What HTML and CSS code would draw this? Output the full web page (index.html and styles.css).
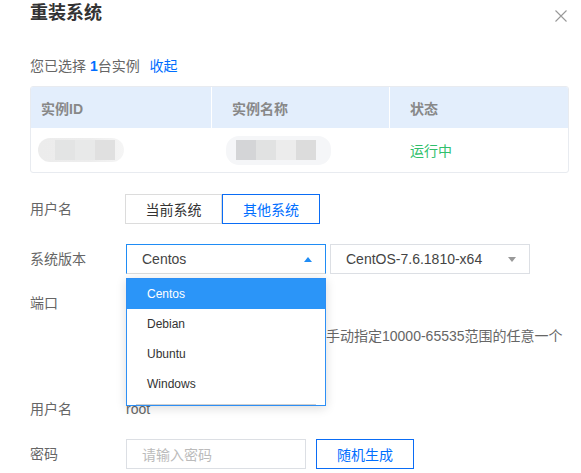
FILE: index.html
```html
<!DOCTYPE html>
<html lang="zh">
<head>
<meta charset="utf-8">
<title>重装系统</title>
<link rel="stylesheet" href="styles.css">
</head>
<body>
<div class="dialog">
  <div class="dlg-head">
    <h1 class="dlg-title">重装系统</h1>
    <svg class="close" width="12" height="12" viewBox="0 0 12 12"><path d="M0.5 0.5L11.5 11.5M11.5 0.5L0.5 11.5" stroke="#999" stroke-width="1.1" fill="none"/></svg>
  </div>

  <div class="picked">您已选择 <b class="num">1</b>台实例 <a class="link">收起</a></div>

  <div class="table">
    <div class="th th1">实例ID</div>
    <div class="th th2">实例名称</div>
    <div class="th th3">状态</div>
    <div class="td td1">
      <div class="pill pill-a"><span class="sq a1"></span><span class="sq a2"></span><span class="sq a3"></span></div>
    </div>
    <div class="td td2">
      <div class="pill pill-b"><span class="sq b1"></span><span class="sq b2"></span><span class="sq b3"></span><span class="sq b4"></span></div>
    </div>
    <div class="td td3"><span class="running">运行中</span></div>
  </div>

  <div class="row row1">
    <div class="label">用户名</div>
    <div class="btn-group">
      <button class="seg">当前系统</button>
      <button class="seg seg-on">其他系统</button>
    </div>
  </div>

  <div class="row row2">
    <div class="label">系统版本</div>
    <div class="selwrap">
      <div class="select select-open">
        <span>Centos</span>
        <span class="tri tri-up"></span>
      </div>
      <ul class="menu">
        <li class="opt opt-on">Centos</li>
        <li class="opt">Debian</li>
        <li class="opt">Ubuntu</li>
        <li class="opt">Windows</li>
        <li class="menu-foot"></li>
      </ul>
    </div>
    <div class="select select2">
      <span>CentOS-7.6.1810-x64</span>
      <span class="tri tri-down"></span>
    </div>
  </div>

  <div class="row row3">
    <div class="label">端口</div>
    <div class="ctrl-col">
      <div class="input port-input"></div>
      <div class="hint">手动指定10000-65535范围的任意一个</div>
    </div>
  </div>

  <div class="row row4">
    <div class="label">用户名</div>
    <div class="value">root</div>
  </div>

  <div class="row row5">
    <div class="label">密码</div>
    <div class="input pwd"><span class="ph">请输入密码</span></div>
    <button class="btn-outline">随机生成</button>
  </div>
</div>
</body>
</html>
```

FILE: styles.css
```css
* { box-sizing: border-box; }
html, body { margin: 0; padding: 0; background: #fff; }
body {
  font-family: "Liberation Sans", "Noto Sans CJK SC", sans-serif;
  font-size: 14px;
  color: #333;
}
.dialog { padding: 0 12px 0 30px; width: 581px; height: 473px; overflow: hidden; }

.dlg-head { display: flex; justify-content: space-between; align-items: flex-start; height: 26px; }
.dlg-title { margin: 0; font-size: 18px; line-height: 26px; font-weight: 700; color: #333; }
.close { margin-top: 10px; margin-right: 2px; }

.picked { margin-top: 30px; line-height: 20px; color: #666; font-size: 14px; }
.picked .num { color: #006eff; font-weight: 700; }
.picked .link { color: #006eff; margin-left: 6px; }

.table {
  margin-top: 10px;
  width: 539px;
  border: 1px solid #e8ebf0;
  border-radius: 3px;
  display: grid;
  grid-template-columns: 180px 178px 1fr;
  grid-template-rows: 41px 44px;
  overflow: hidden;
}
.th { background: #e3eefc; color: #888; font-weight: 700; display: flex; align-items: center; }
.th1 { padding-left: 10px; }
.th2 { padding-left: 20px; border-left: 1px solid #fff; }
.th3 { padding-left: 20px; border-left: 1px solid #fff; }
.td { display: flex; align-items: center; }
.td1 { padding-left: 7px; }
.td2 { padding-left: 15px; }
.td3 { padding-left: 21px; }
.running { color: #31bf6c; }

.pill { display: flex; align-items: center; border-radius: 13px; }
.pill-a { width: 86px; height: 24px; background: linear-gradient(90deg, #ececec 0, #ededed 60%, #f5f5f5 100%); padding-left: 17px; }
.pill-b { width: 105px; height: 29px; background: #f5f6f8; padding-left: 10px; }
.sq { width: 20px; height: 20px; display: block; }
.a1 { background: #e3e4e4; }
.a2 { background: #e8e9e9; }
.a3 { background: #e0e0e0; }
.b1 { background: #d4d5d7; }
.b2 { background: #e1e2e2; }
.b3 { background: #ececec; }
.b4 { background: #dcdcdc; }

.row { display: flex; align-items: center; }
.label { width: 96px; flex: none; color: #666; line-height: 30px; }
.row1 { margin-top: 21px; height: 30px; }
.row2 { margin-top: 20px; height: 30px; }
.row3 { margin-top: 14px; align-items: flex-start; }
.row4 { margin-top: 48px; height: 30px; }
.row5 { margin-top: 15px; height: 30px; }

.btn-group { display: flex; margin-left: -1px; }
.seg {
  font: inherit; height: 30px; background: #fff; color: #333; cursor: pointer;
  border: 1px solid #dcdcdc; padding: 0; width: 97px;
}
.seg-on { border-color: #0a6cf5; color: #006eff; width: 98px; }

.selwrap { position: relative; }
.select {
  width: 200px; height: 30px; border: 1px solid #dcdfe4; display: flex; align-items: center;
  justify-content: space-between; padding: 0 13px 0 15px; color: #444; background: #fff;
}
.select-open { border-color: #1f8cf5; border-bottom-color: #dcdcdc; }
.select2 { margin-left: 4px; }
.tri { width: 0; height: 0; border-left: 4px solid transparent; border-right: 4px solid transparent; }
.tri-up { border-bottom: 5px solid #1f8cf5; }
.tri-down { border-top: 5px solid #999; }

.menu {
  position: absolute; left: 0; top: 34px; z-index: 5;
  width: 200px; margin: 0; padding: 0; list-style: none;
  background: #fff; border: 1px solid #2d8ff5;
  box-shadow: 0 2px 10px rgba(0, 0, 0, 0.14);
}
.opt { height: 30px; line-height: 30px; padding-left: 20px; font-size: 12px; color: #333; }
.opt-on { background: #2b95f8; color: #fff; }
.menu-foot { height: 6px; margin: 0 9px 0 9px; border-bottom: 1px solid #cfcfcf; }

.ctrl-col { display: flex; flex-direction: column; }
.input { width: 180px; height: 30px; border: 1px solid #dcdfe4; display: flex; align-items: center; padding-left: 15px; }
.port-input { width: 200px; }
.hint { margin-top: 8px; line-height: 20px; color: #666; padding-left: 200px; white-space: nowrap; }
.value { color: #666; }
.ph { color: #bbb; }
.btn-outline {
  font: inherit; margin-left: 10px; width: 98px; height: 30px; background: #fff;
  border: 1px solid #0a6cf5; color: #006eff; padding: 0;
}
```
